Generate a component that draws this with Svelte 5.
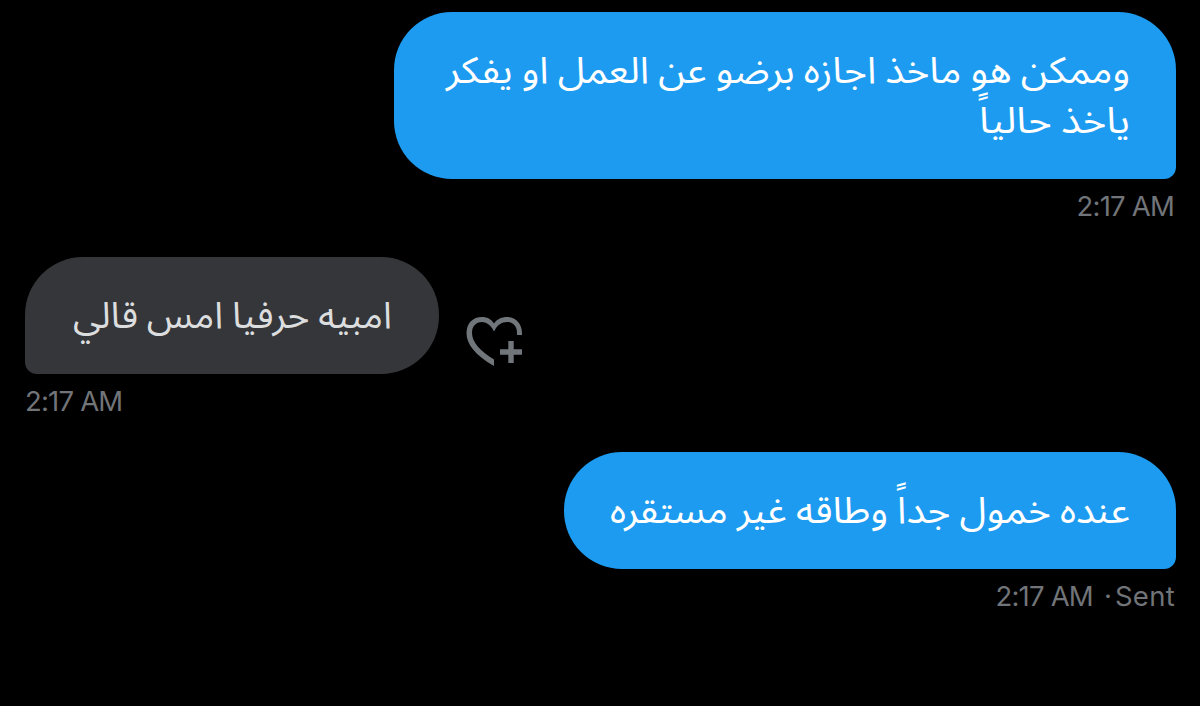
<script>
  const messages = [
    { lines: ["وممكن هو ماخذ اجازه برضو عن العمل او يفكر", "ياخذ حالياً"], widths: [684, 151], time: "2:17 AM", own: true, width: 782 },
    { lines: ["امبيه حرفيا امس قالي"], widths: [319], time: "2:17 AM", own: false, width: 414 },
    { lines: ["عنده خمول جداً وطاقه غير مستقره"], widths: [520], time: "2:17 AM", status: "Sent", own: true, width: 612 },
  ];
</script>

<main class="chat">
  {#each messages as message}
    <section class="message" class:own={message.own}>
      <div class="message-row">
        <div class="bubble" style="width: {message.width}px">
          {#each message.lines as line, i}
            <svg class="line" width={message.widths[i]} height="50" role="img" aria-label={line}>
              <text x={message.widths[i]} y="38" direction="rtl" textLength={message.widths[i]} lengthAdjust="spacingAndGlyphs">{line}</text>
            </svg>
          {/each}
        </div>
        {#if !message.own}
          <button class="react" aria-label="React">
            <svg width="60" height="54" viewBox="0 0 60 54">
              <path d="M29 51C10 40 1.5 29 1.5 18C1.5 8 8 2 17 2C22 2 26 4 29 8.5C32 4 37 2 42 2C51 2 57 9 57 18V20H52V18C52 11 48 7 42 7C37 7 33 10 31 13L29 16.5L27 13C25 10 21 7 17 7C11 7 7 11 7 18C7 27 15 36 29 44.5Z" />
              <path d="M43.3 26H48.7V34.3H57V39.7H48.7V48H43.3V39.7H35V34.3H43.3Z" />
            </svg>
          </button>
        {/if}
      </div>
      <div class="meta">
        <span class="time">{message.time}</span>
        {#if message.status}
          <span class="dot">·</span>
          <span class="status">{message.status}</span>
        {/if}
      </div>
    </section>
  {/each}
</main>

<style>
  :global(body) {
    margin: 0;
    background: #000;
  }

  .chat {
    box-sizing: border-box;
    height: 706px;
    padding: 12px 24px 0 25px;
    display: flex;
    flex-direction: column;
    gap: 25px;
    overflow: hidden;
    background: #000;
    color: #717478;
    font-family: Inter, sans-serif;
  }

  .message {
    display: flex;
    flex-direction: column;
    align-items: flex-start;
  }

  .own {
    align-items: flex-end;
  }

  .message-row {
    display: flex;
    align-items: flex-end;
    gap: 26px;
  }

  .bubble {
    box-sizing: border-box;
    padding: 33px 47px 34px 46px;
    display: flex;
    flex-direction: column;
    align-items: flex-end;
    background: #343639;
    color: #dcddde;
    border-radius: 58px 58px 58px 12px;
  }

  .own .bubble {
    padding-right: 46px;
    background: #1d9bf0;
    color: #fff;
    border-radius: 58px 58px 12px 58px;
  }

  .line {
    display: block;
    overflow: visible;
    fill: currentColor;
    font: 37px "Noto Sans Arabic", "DejaVu Sans", sans-serif;
    word-spacing: -1px;
  }

  .meta {
    height: 53px;
    display: flex;
    align-items: center;
    font-size: 27.5px;
  }

  .time {
    letter-spacing: -0.8px;
  }

  .own .time {
    padding-right: 2px;
  }

  .dot {
    width: 8px;
    margin: 0 3px 0 9px;
    text-align: center;
  }

  .status {
    margin-right: 1px;
    letter-spacing: 0.3px;
  }

  .react {
    padding: 0;
    border: 0;
    margin-bottom: 5px;
    background: none;
    color: #71767b;
  }

  .react svg {
    display: block;
    fill: currentColor;
  }
</style>
